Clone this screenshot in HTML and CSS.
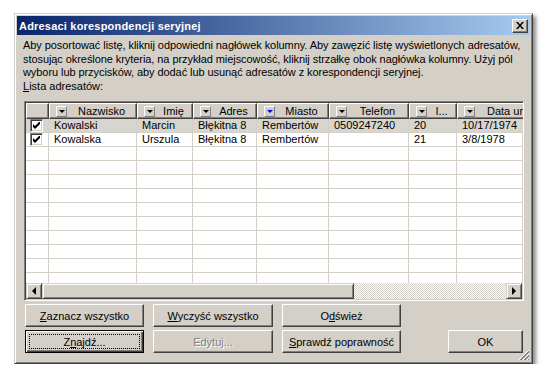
FILE: index.html
```html
<!DOCTYPE html>
<html lang="pl">
<head>
  <meta charset="UTF-8">
  <title>Adresaci korespondencji seryjnej</title>
  <link rel="stylesheet" href="styles.css">
</head>
<body>
  <div class="dialog">
    <div class="titlebar">
      <span class="title">Adresaci korespondencji seryjnej</span>
      <span class="close">
        <svg width="8" height="7" viewBox="0 0 8 7">
          <path d="M0 0h2l2 2.5L6 0h2L5 3.5 8 7H6L4 4.5 2 7H0l3-3.5z" fill="#000"/>
        </svg>
      </span>
    </div>

    <div class="body">
      <p class="intro">Aby posortować listę, kliknij odpowiedni nagłówek kolumny. Aby zawęzić listę wyświetlonych adresatów,<br>stosując określone kryteria, na przykład miejscowość, kliknij strzałkę obok nagłówka kolumny. Użyj pól<br>wyboru lub przycisków, aby dodać lub usunąć adresatów z korespondencji seryjnej.</p>
      <div class="label"><u>L</u>ista adresatów:</div>

      <div class="list">
        <div class="grid" id="grid">
          <div class="hcell"></div>
          <!-- header and rows are built below -->
        </div>
        <div class="hscroll">
          <span class="sbtn"><span class="tri tri-left"></span></span>
          <span class="thumb"></span>
          <span class="track"></span>
          <span class="sbtn"><span class="tri tri-right"></span></span>
        </div>
      </div>

      <div class="actions">
        <button class="btn"><u>Z</u>aznacz wszystko</button>
        <button class="btn"><u>W</u>yczyść wszystko</button>
        <button class="btn">O<u>d</u>śwież</button>
        <span></span>
        <button class="btn default"><span class="focus">Z<u>n</u>ajdź...</span></button>
        <button class="btn disabled">Edytuj...</button>
        <button class="btn"><u>S</u>prawdź poprawność</button>
        <button class="btn ok">OK</button>
      </div>
    </div>

    <svg class="grip" width="12" height="12" viewBox="0 0 12 12">
      <path d="M11 1L1 11M11 5L5 11M11 9L9 11" stroke="#fff" stroke-width="1"/>
      <path d="M11 2L2 11M11 3L3 11M11 6L6 11M11 7L7 11M11 10L10 11" stroke="#808080" stroke-width="1"/>
    </svg>
  </div>

  <script>
    const columns = [
      { name: "Nazwisko" },
      { name: "Imię" },
      { name: "Adres" },
      { name: "Miasto", filtered: true },
      { name: "Telefon" },
      { name: "I..." },
      { name: "Data ur", last: true }
    ];
    const rows = [
      ["Kowalski", "Marcin", "Błękitna 8", "Rembertów", "0509247240", "20", "10/17/1974"],
      ["Kowalska", "Urszula", "Błękitna 8", "Rembertów", "", "21", "3/8/1978"]
    ];
    const grid = document.getElementById("grid");

    columns.forEach((col) => {
      const cell = document.createElement("div");
      cell.className = "hcell" + (col.last ? " last" : "");
      cell.innerHTML = `<span class="drop${col.filtered ? " blue" : ""}"><span class="tri"></span></span><span class="hname">${col.name}</span>`;
      grid.appendChild(cell);
    });

    for (let r = 0; r < 13; r++) {
      const data = rows[r];
      const check = document.createElement("div");
      check.className = "cell first" + (r === 0 ? " sel" : "");
      if (data) check.innerHTML = '<span class="check"><svg width="7" height="7" viewBox="0 0 7 7"><path d="M0 2v3l2 2 5-5V-1L2 4z" fill="#000"/></svg></span>';
      grid.appendChild(check);
      for (let c = 0; c < columns.length; c++) {
        const cell = document.createElement("div");
        cell.className = "cell" + (r === 0 ? " sel" : "");
        cell.textContent = data ? data[c] : "";
        grid.appendChild(cell);
      }
    }
  </script>
</body>
</html>
```

FILE: styles.css
```css
* {
  box-sizing: border-box;
  margin: 0;
  padding: 0;
}

body {
  background: #fff;
  font-family: 'Liberation Sans', Arial, sans-serif;
  font-size: 11px;
  color: #000;
}

.dialog {
  position: relative;
  width: 519px;
  height: 351px;
  margin: 13px 0 0 14px;
  background: #d4d0c8;
  border: 1px solid;
  border-color: #d4d0c8 #404040 #404040 #d4d0c8;
  box-shadow: inset 1px 1px #fff, inset -1px -1px #808080, 3px 3px 4px rgba(0, 0, 0, 0.45);
  padding: 2px;
  display: flex;
  flex-direction: column;
}

.titlebar {
  height: 19px;
  background: linear-gradient(to right, #0a246a, #a6caf0);
  display: flex;
  align-items: center;
  justify-content: space-between;
  padding: 0 2px 0 2px;
}

.title {
  color: #fff;
  font-weight: bold;
  font-size: 11px;
  letter-spacing: 0.2px;
}

.close {
  width: 16px;
  height: 14px;
  background: #d4d0c8;
  border: 1px solid;
  border-color: #fff #404040 #404040 #fff;
  box-shadow: inset -1px -1px #808080;
  display: flex;
  align-items: center;
  justify-content: center;
}

.body {
  padding: 4px 6px 0 7px;
}

.intro {
  line-height: 13.5px;
  white-space: nowrap;
  letter-spacing: -0.07px;
  margin-left: -1px;
}

.label {
  line-height: 13.5px;
  margin-bottom: 8px;
  margin-left: -1px;
}

.list {
  height: 200px;
  border: 1px solid;
  border-color: #808080 #fff #fff #808080;
  box-shadow: inset 1px 1px #404040, inset -1px -1px #d4d0c8;
  padding: 1px;
  background: #fff;
  display: flex;
  flex-direction: column;
  overflow: hidden;
}

.grid {
  flex: 1;
  display: grid;
  grid-template-columns: 23px 88px 56px 64px 72px 80px 48px 120px;
  grid-auto-rows: 14px;
  grid-template-rows: 16px;
  overflow: hidden;
  width: 551px;
}

.hcell {
  background: #d4d0c8;
  border: 1px solid;
  border-color: #fff #404040 #404040 #fff;
  box-shadow: inset -1px -1px #808080;
  display: flex;
  align-items: center;
  padding-left: 6px;
  white-space: nowrap;
  overflow: hidden;
}

.hname {
  flex: 1;
  text-align: center;
  line-height: 12px;
}

.hcell.last .hname {
  text-align: left;
  padding-left: 12px;
}

.drop {
  width: 11px;
  height: 11px;
  flex: none;
  border: 1px solid;
  border-color: #fff #808080 #808080 #fff;
  display: flex;
  align-items: center;
  justify-content: center;
}

.tri {
  width: 0;
  height: 0;
  border-left: 3px solid transparent;
  border-right: 3px solid transparent;
  border-top: 3px solid #000;
}

.drop.blue .tri {
  border-top-color: #0000ff;
}

.cell {
  border-right: 1px solid #d4d0c8;
  border-bottom: 1px solid #d4d0c8;
  padding-left: 5px;
  line-height: 13px;
  white-space: nowrap;
  overflow: hidden;
}

.cell.first {
  padding-left: 4px;
}

.cell.sel {
  background: #d8d5cf;
}

.check {
  display: flex;
  align-items: center;
  justify-content: center;
  width: 13px;
  height: 13px;
  background: #fff;
  border: 1px solid;
  border-color: #808080 #fff #fff #808080;
  box-shadow: inset 1px 1px #404040, inset -1px -1px #d4d0c8;
}

.hscroll {
  height: 16px;
  flex: none;
  display: flex;
}

.sbtn {
  width: 16px;
  height: 16px;
  flex: none;
  background: #d4d0c8;
  border: 1px solid;
  border-color: #d4d0c8 #404040 #404040 #d4d0c8;
  box-shadow: inset 1px 1px #fff, inset -1px -1px #808080;
  display: flex;
  align-items: center;
  justify-content: center;
}

.tri-left {
  border: none;
  border-top: 4px solid transparent;
  border-bottom: 4px solid transparent;
  border-right: 4px solid #000;
}

.tri-right {
  border: none;
  border-top: 4px solid transparent;
  border-bottom: 4px solid transparent;
  border-left: 4px solid #000;
}

.thumb {
  width: 312px;
  flex: none;
  background: #d4d0c8;
  border: 1px solid;
  border-color: #d4d0c8 #404040 #404040 #d4d0c8;
  box-shadow: inset 1px 1px #fff, inset -1px -1px #808080;
}

.track {
  flex: 1;
  background-color: #fff;
  background-image: repeating-conic-gradient(#d4d0c8 0 25%, #fff 0 50%);
  background-size: 2px 2px;
}

.actions {
  display: grid;
  grid-template-columns: 119px 120px 119px 1fr;
  column-gap: 9px;
  row-gap: 3px;
  margin: 3px 1px 0 1px;
}

.btn {
  height: 23px;
  font-family: inherit;
  font-size: 11px;
  color: #000;
  background: #d4d0c8;
  border: 1px solid;
  border-color: #fff #404040 #404040 #fff;
  box-shadow: inset -1px -1px #808080;
  display: flex;
  align-items: center;
  justify-content: center;
}

.btn.default {
  border: 1px solid #000;
  box-shadow: inset 1px 1px #fff, inset -1px -1px #404040, inset -2px -2px #808080;
  padding: 3px;
}

.focus {
  flex: 1;
  height: 100%;
  border: 1px dotted #000;
  display: flex;
  align-items: center;
  justify-content: center;
}

.btn.disabled {
  color: #808080;
  text-shadow: 1px 1px #fff;
}

.btn.ok {
  width: 75px;
  justify-self: end;
}

.grip {
  position: absolute;
  right: 2px;
  bottom: 2px;
}
```
